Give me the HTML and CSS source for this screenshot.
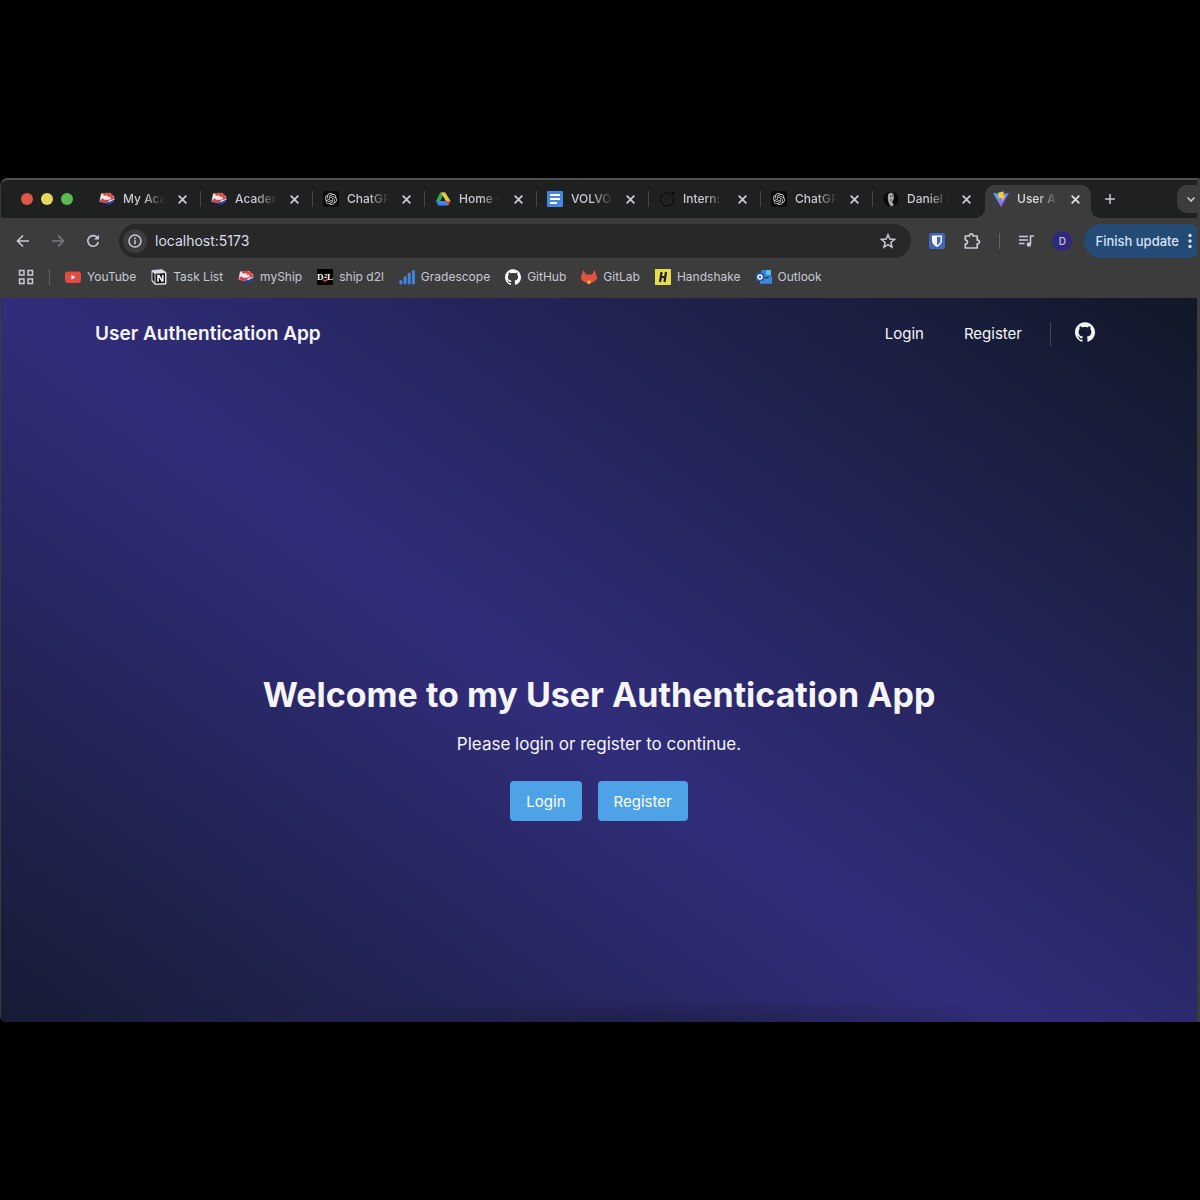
FILE: index.html
```html
<!DOCTYPE html>
<html lang="en">
<head>
<meta charset="utf-8">
<meta name="viewport" content="width=device-width, initial-scale=1">
<title>User Authentication App</title>
<link rel="stylesheet" href="styles.css">
</head>
<body>
<svg class="defs" aria-hidden="true">
  <defs>
    <linearGradient id="vite-blue" x1="0" y1="0" x2="1" y2="1"><stop offset="0" stop-color="#41b8f5"/><stop offset="1" stop-color="#b43cf0"/></linearGradient>
    <symbol id="close" viewBox="0 0 10 10"><path d="M1.5 1.5l7 7m0-7l-7 7" fill="none" stroke="currentColor" stroke-width="1.6"/></symbol>
    <symbol id="ship" viewBox="0 0 16 16">
      <path d="M4.500 11c3 .8 6-.5 11-4 0 4.500-2.500 6.500-6 6.500-2.500 0-4-.8-5-2.500z" fill="#24429a"/>
      <path d="M2 2.500l9-.5 4 3.500.5 3-5 2.500-6 .5-4-1z" fill="#e8e2ec"/>
      <path d="M3.500 2.500L8 1.500l5 2 2.500 4-3 1.500-1.500-3.500-2 .5-1-2-3 1z" fill="#e2463f"/>
      <path d="M.5 9.500l3-2 4 1.500 5-1-4 3-5 .5z" fill="#d64242"/>
      <path d="M4 5l2.500 1.500L5 8.500M8.500 6L10 8" fill="none" stroke="#f7f3f8" stroke-width="1.500"/>
    </symbol>
    <symbol id="openai" viewBox="-4 -4 32 32"><rect x="-4" y="-4" width="32" height="32" rx="5" fill="#0b0c0c"/><path fill="#d8d8dc" d="M22.2819 9.8211a5.9847 5.9847 0 0 0-.5157-4.9108 6.0462 6.0462 0 0 0-6.5098-2.9A6.0651 6.0651 0 0 0 4.9807 4.1818a5.9847 5.9847 0 0 0-3.9977 2.9 6.0462 6.0462 0 0 0 .7427 7.0966 5.98 5.98 0 0 0 .511 4.9107 6.051 6.051 0 0 0 6.5146 2.9001A5.9847 5.9847 0 0 0 13.2599 24a6.0557 6.0557 0 0 0 5.7718-4.2058 5.9894 5.9894 0 0 0 3.9977-2.9001 6.0557 6.0557 0 0 0-.7475-7.0729zm-9.022 12.6081a4.4755 4.4755 0 0 1-2.8764-1.0408l.1419-.0804 4.7783-2.7582a.7948.7948 0 0 0 .3927-.6813v-6.7369l2.02 1.1686a.071.071 0 0 1 .038.052v5.5826a4.504 4.504 0 0 1-4.4945 4.4944zm-9.6607-4.1254a4.4708 4.4708 0 0 1-.5346-3.0137l.142.0852 4.783 2.7582a.7712.7712 0 0 0 .7806 0l5.8428-3.3685v2.3324a.0804.0804 0 0 1-.0332.0615L9.74 19.9502a4.4992 4.4992 0 0 1-6.1408-1.6464zM2.3408 7.8956a4.485 4.485 0 0 1 2.3655-1.9728V11.6a.7664.7664 0 0 0 .3879.6765l5.8144 3.3543-2.0201 1.1685a.0757.0757 0 0 1-.071 0l-4.8303-2.7865A4.504 4.504 0 0 1 2.3408 7.872zm16.5963 3.8558L13.1038 8.364 15.1192 7.2a.0757.0757 0 0 1 .071 0l4.8303 2.7913a4.4944 4.4944 0 0 1-.6765 8.1042v-5.6772a.79.79 0 0 0-.407-.667zm2.0107-3.0231l-.142-.0852-4.7735-2.7818a.7759.7759 0 0 0-.7854 0L9.409 9.2297V6.8974a.0662.0662 0 0 1 .0284-.0615l4.8303-2.7866a4.4992 4.4992 0 0 1 6.6802 4.66zM8.3065 12.863l-2.02-1.1638a.0804.0804 0 0 1-.038-.0567V6.0742a4.4992 4.4992 0 0 1 7.3757-3.4537l-.142.0805L8.704 5.459a.7948.7948 0 0 0-.3927.6813zm1.0976-2.3654l2.602-1.4998 2.6069 1.4998v2.9994l-2.5974 1.4997-2.6067-1.4997Z"/></symbol>
    <symbol id="github" viewBox="0 0 24 24"><path fill="currentColor" d="M12 .297c-6.63 0-12 5.373-12 12 0 5.303 3.438 9.8 8.205 11.385.6.113.82-.258.82-.577 0-.285-.01-1.04-.015-2.04-3.338.724-4.042-1.61-4.042-1.61C4.422 18.07 3.633 17.7 3.633 17.7c-1.087-.744.084-.729.084-.729 1.205.084 1.838 1.236 1.838 1.236 1.07 1.835 2.809 1.305 3.495.998.108-.776.417-1.305.76-1.605-2.665-.3-5.466-1.332-5.466-5.93 0-1.31.465-2.38 1.235-3.22-.135-.303-.54-1.523.105-3.176 0 0 1.005-.322 3.3 1.23.96-.267 1.98-.399 3-.405 1.02.006 2.04.138 3 .405 2.28-1.552 3.285-1.23 3.285-1.23.645 1.653.24 2.873.12 3.176.765.84 1.23 1.91 1.23 3.22 0 4.61-2.805 5.625-5.475 5.92.42.36.81 1.096.81 2.22 0 1.606-.015 2.896-.015 3.286 0 .315.21.69.825.57C20.565 22.092 24 17.592 24 12.297c0-6.627-5.373-12-12-12"/></symbol>
  </defs>
</svg>

<div class="window">
  <header class="chrome">
    <div class="tab-strip">
      <div class="lights"><i class="light red"></i><i class="light yellow"></i><i class="light green"></i></div>
      <div class="tabs">
        <div class="tab"><svg class="icon"><use href="#ship"/></svg><a class="tab-title" href="#">My Acad</a><button class="close" aria-label="Close tab"><svg><use href="#close"/></svg></button></div>
        <div class="tab"><svg class="icon"><use href="#ship"/></svg><a class="tab-title" href="#">Academ</a><button class="close" aria-label="Close tab"><svg><use href="#close"/></svg></button></div>
        <div class="tab"><svg class="icon"><use href="#openai"/></svg><a class="tab-title" href="#">ChatGPT</a><button class="close" aria-label="Close tab"><svg><use href="#close"/></svg></button></div>
        <div class="tab"><svg class="icon" viewBox="0 0 16 16"><path d="M5.300 1.500h5l-2.500 4-3.600 7L1 10z" fill="#36a852"/><path d="M6 1.500h4.300L15.500 10h-5z" fill="#f0c83c"/><path d="M1 10h14.500l-2.500 4.500H3.500z" fill="#4285e8"/><path d="M11 10h4.500L13 14.500z" fill="#dd4b3e"/><path d="M8 5.500l2.800 4.500H5.300z" fill="#1f2020"/></svg><a class="tab-title" href="#">Home - G</a><button class="close" aria-label="Close tab"><svg><use href="#close"/></svg></button></div>
        <div class="tab"><svg class="icon" viewBox="0 0 16 16"><rect width="16" height="16" rx="1" fill="#4386e4"/><path d="M3 4h10M3 8h10M3 12h7" stroke="#fff" stroke-width="2"/></svg><a class="tab-title" href="#">VOLVO</a><button class="close" aria-label="Close tab"><svg><use href="#close"/></svg></button></div>
        <div class="tab"><svg class="icon" viewBox="0 0 16 16"><circle cx="8" cy="8.500" r="6.500" fill="none" stroke="#080909"/><circle cx="14" cy="2" r="1.500" fill="#080909"/></svg><a class="tab-title" href="#">Intern: S</a><button class="close" aria-label="Close tab"><svg><use href="#close"/></svg></button></div>
        <div class="tab"><svg class="icon"><use href="#openai"/></svg><a class="tab-title" href="#">ChatGPT</a><button class="close" aria-label="Close tab"><svg><use href="#close"/></svg></button></div>
        <div class="tab"><svg class="icon" viewBox="0 0 16 16"><circle cx="8" cy="8" r="7.500" fill="#080909"/><path d="M5 4c1-3 6-3 6 1 0 3-1 5-2 6l2 3-3 1.500-2-3C5 10 4.500 7 5 4z" fill="#aaa9ad"/><path d="M7 5.500h1.500M7 9h2M9 3l1.500 3" stroke="#45454a"/></svg><a class="tab-title" href="#">Daniel P</a><button class="close" aria-label="Close tab"><svg><use href="#close"/></svg></button></div>
        <div class="tab active"><svg class="icon" viewBox="0 0 16 16"><path d="M0 2l8 14 8-14-7 1z" fill="url(#vite-blue)"/><path d="M5.500 1.500l5.500-1-1 4h2.500L8.500 11l.5-4H5.500z" fill="#f0d33a"/></svg><a class="tab-title" href="#">User Au</a><button class="close" aria-label="Close tab"><svg><use href="#close"/></svg></button></div>
      </div>
      <button class="new-tab" aria-label="New tab"><svg viewBox="0 0 12 12"><path d="M6 1v10M1 6h10" stroke="currentColor" stroke-width="1.500"/></svg></button>
      <button class="tab-search" aria-label="Search tabs"><svg viewBox="0 0 10 10"><path d="M1.500 3.500L5 7l3.500-3.500" fill="none" stroke="currentColor" stroke-width="1.600"/></svg></button>
    </div>

    <div class="toolbar">
      <div class="nav-buttons">
        <button aria-label="Back"><svg class="icon" viewBox="0 0 16 16"><path d="M14 8H3m5-5.500L2.500 8 8 13.500" fill="none" stroke="currentColor" stroke-width="1.600"/></svg></button>
        <button class="dim" aria-label="Forward"><svg class="icon" viewBox="0 0 16 16"><path d="M2 8h11M8 2.500L13.500 8 8 13.500" fill="none" stroke="currentColor" stroke-width="1.600"/></svg></button>
        <button aria-label="Reload"><svg class="icon" viewBox="0 0 16 16"><path d="M13.300 9A5.300 5.300 0 1 1 12 4.300l1 1.200" fill="none" stroke="currentColor" stroke-width="1.600"/><path d="M13.900 1.800V6.600H9z" fill="currentColor"/></svg></button>
      </div>
      <div class="address">
        <button class="site-info" aria-label="Site information"><svg class="icon" viewBox="0 0 16 16"><circle cx="8" cy="8" r="6" fill="none" stroke="currentColor" stroke-width="1.500"/><path d="M8 7.300V11.300M8 4.600V6.200" stroke="currentColor" stroke-width="1.600"/></svg></button>
        <input type="text" aria-label="Address" value="localhost:5173">
        <button aria-label="Bookmark"><svg class="icon" viewBox="0 0 16 16"><path d="M8 1.800l1.800 4.300 4.700.4-3.600 3 1.100 4.600L8 11.700l-4 2.400 1.100-4.600-3.600-3 4.700-.4z" fill="none" stroke="currentColor" stroke-width="1.500"/></svg></button>
      </div>
      <div class="extensions">
        <button aria-label="Bitwarden"><svg class="icon" viewBox="0 0 16 16"><rect width="16" height="16" rx="2" fill="#4266b4"/><path d="M3 2.500h10v5c0 3-2 5-5 6.500-3-1.500-5-3.500-5-6.500z" fill="#f4f7ff"/><path d="M8 4h3.500v3.500c0 2-1.500 3.500-3.500 4.700z" fill="#4266b4"/></svg></button>
        <button aria-label="Extensions"><svg class="icon puzzle" viewBox="0 0 18 18"><path d="M2.300 4h4.200C6.300 1 10.300 1 10.100 4h4.100v4.100c3 0 3 4 0 3.800V16H2.300v-4c2.900-.2 2.900-3.900 0-4z" fill="none" stroke="currentColor" stroke-width="1.700" stroke-linejoin="round"/></svg></button>
        <i class="rule"></i>
        <button aria-label="Media"><svg class="icon" viewBox="0 0 16 16"><path d="M1 3.500h9M1 7h9M1 10.500h5.500M12.500 11V3H16" fill="none" stroke="currentColor" stroke-width="1.600"/><circle cx="10.900" cy="11.500" r="2.200" fill="currentColor"/></svg></button>
        <button class="avatar" aria-label="Profile">D</button>
      </div>
      <button class="update">Finish update <svg viewBox="0 0 4 16"><circle cx="2" cy="2.500" r="1.700"/><circle cx="2" cy="8" r="1.700"/><circle cx="2" cy="13.500" r="1.700"/></svg></button>
    </div>

    <nav class="bookmarks" aria-label="Bookmarks">
      <button aria-label="Tab groups"><svg class="icon" viewBox="0 0 16 16"><path d="M1.500 1.500h4.500v4.500H1.500zM10 1.500h4.500v4.500H10zM1.500 10h4.500v4.500H1.500zM10 10h4.500v4.500H10z" fill="none" stroke="currentColor" stroke-width="1.500"/></svg></button>
      <i class="rule"></i>
      <a href="#"><svg class="icon" viewBox="0 0 16 16"><rect y="2.500" width="16" height="11.500" rx="3" fill="#e24b42"/><path d="M6.500 6v4.500l4-2.250z" fill="#fff"/></svg>YouTube</a>
      <a href="#"><svg class="icon" viewBox="0 0 16 16"><path d="M1 1.500L11 .8l4 2.700V15l-11 .5L1 12z" fill="#d9d8e2" stroke="#d9d8e2" stroke-linejoin="round"/><path d="M1.500 3L3.500 4.800V13.500L1.500 11z" fill="#141416"/><path d="M4.500 4.700l9.500-.5V14l-9.500.5z" fill="#141416"/><path d="M7 12.700V6.500h1l3 5.500h.8V6" fill="none" stroke="#eee" stroke-width="1.700"/></svg>Task List</a>
      <a href="#"><svg class="icon"><use href="#ship"/></svg>myShip</a>
      <a href="#"><svg class="icon" viewBox="0 0 16 16"><rect width="16" height="16" fill="#000"/><text x="0" y="11" class="d2l-text">D</text><text x="10" y="11" class="d2l-text">L</text><text x="7" y="9" class="d2l-small">2</text><path d="M6 10.500l2 1.500 2.500-1.500" fill="none" stroke="#e0483f" stroke-width="1.500"/></svg>ship d2l</a>
      <a href="#"><svg class="icon" viewBox="0 0 16 16"><path d="M1.800 14v-1.500M6 14V8.500M10.200 14V5M14.400 14V2.500" stroke="#4384e0" stroke-width="3" stroke-linecap="round"/></svg>Gradescope</a>
      <a href="#"><svg class="icon white"><use href="#github"/></svg>GitHub</a>
      <a href="#"><svg class="icon" viewBox="0 0 16 16"><path d="M2.500 1L0 7.500c-.3 2 .6 3.500 2 4.500l6 3.500 6-3.500c1.400-1 2.300-2.500 2-4.500L13.500 1 11 5.500H5z" fill="#e2523f"/><path d="M5.500 12L8 10.500l2.500 1.500L8 15.500z" fill="#ee7a36"/><path d="M6.500 13L8 12l1.500 1L8 15z" fill="#f5d150"/></svg>GitLab</a>
      <a href="#"><svg class="icon" viewBox="0 0 16 16"><rect width="16" height="16" fill="#e6dc4c"/><path d="M6.500 3L5 13M11 3L9.500 13M5 8.500l6-1" stroke="#1c2030" stroke-width="2.200" fill="none"/></svg>Handshake</a>
      <a href="#"><svg class="icon" viewBox="0 0 16 16"><rect x="5" y="1" width="10" height="7" rx="1" fill="#2b86d9"/><path d="M10 1h5v5h-5z" fill="#61b9f2"/><path d="M4 7l6 3 6-3v7.500H4z" fill="#3f94e6"/><path d="M4 14.500L16 8v6.500z" fill="#3d86df"/><rect y="4" width="8" height="8" rx="1" fill="#2459b4"/><circle cx="4" cy="8" r="2" fill="none" stroke="#fff" stroke-width="1.400"/></svg>Outlook</a>
    </nav>
  </header>

  <div class="page">
    <header class="site-header">
      <a class="brand" href="#">User Authentication App</a>
      <nav class="site-nav" aria-label="Main">
        <a href="#">Login</a>
        <a href="#">Register</a>
        <a class="github" href="#" aria-label="GitHub"><svg><use href="#github"/></svg></a>
      </nav>
    </header>
    <main class="hero">
      <h1>Welcome to my User Authentication App</h1>
      <p>Please login or register to continue.</p>
      <div class="actions"><button>Login</button><button>Register</button></div>
    </main>
  </div>
</div>
</body>
</html>
```

FILE: styles.css
```css
* { box-sizing: border-box; }

body {
  margin: 0;
  min-height: 100vh;
  display: flex;
  flex-direction: column;
  justify-content: center;
  background: #000;
  font-family: Inter, "Liberation Sans", sans-serif;
  overflow-x: hidden;
}

button, input {
  font: inherit;
  color: inherit;
  background: none;
  border: 0;
  padding: 0;
}

button {
  display: flex;
  align-items: center;
  justify-content: center;
  cursor: pointer;
}

a { color: inherit; text-decoration: none; }
svg { display: block; flex: none; }
.defs { position: absolute; width: 0; height: 0; }
.icon { width: 16px; height: 16px; }
.white { color: #fff; }

.window {
  border: solid #3c3c3c;
  border-width: 2px 3px 0 1px;
  border-top-color: #505151;
  border-radius: 8px 0 0 6px;
  overflow: hidden;
}

/* Browser chrome */
.chrome {
  background: #3c3c3c;
  color: #c9c8d6;
  font-size: 12px;
  font-weight: 500;
  margin-right: -3px;
}

.tab-strip {
  display: flex;
  align-items: center;
  height: 38px;
  background: #1f2121;
  overflow: hidden;
}

.lights { display: flex; gap: 8px; padding: 0 16px 0 20px; }
.light { width: 12px; height: 12px; border-radius: 50%; }
.red { background: #e0554a; }
.yellow { background: #e4d95c; }
.green { background: #5bbb50; }

.tabs { display: flex; align-self: stretch; }

.tab {
  display: flex;
  align-items: center;
  width: 112px;
  padding: 0 12px 0 10px;
  position: relative;
}

.tab:not(.active)::after {
  content: "";
  position: absolute;
  right: 0;
  width: 1px;
  height: 16px;
  background: #444547;
}

.tab:nth-last-child(2)::after { display: none; }

.tab.active {
  width: 106px;
  margin-top: 5px;
  padding: 0 9px 5px 8px;
  border-radius: 10px 10px 0 0;
  background: #3c3c3c;
  color: #dddce8;
}

.tab.active::before, .tab.active::after {
  content: "";
  position: absolute;
  bottom: 0;
  width: 10px;
  height: 10px;
}

.tab.active::before { left: -10px; background: radial-gradient(circle at 0 0, transparent 10px, #3c3c3c 10px); }
.tab.active::after { right: -10px; background: radial-gradient(circle at 100% 0, transparent 10px, #3c3c3c 10px); }

.tab-title {
  flex: 1;
  margin: 0 8px;
  line-height: 16px;
  white-space: nowrap;
  overflow: hidden;
  mask-image: linear-gradient(to right, #000 50%, transparent 95%);
}

.close { width: 14px; height: 14px; }
.close svg { width: 11px; height: 11px; }
.new-tab { margin-left: 12px; width: 14px; height: 14px; }
.new-tab svg { width: 12px; height: 12px; }

.tab-search {
  flex: none;
  width: 28px;
  height: 28px;
  margin: 0 -5px 0 auto;
  border-radius: 10px;
  background: #3c3c3c;
}

.tab-search svg { width: 10px; height: 10px; }

.toolbar { display: flex; align-items: center; height: 45px; padding-left: 14px; }
.nav-buttons { display: flex; gap: 19px; }
.dim { color: #7b7b80; }

.address {
  flex: 1;
  display: flex;
  align-items: center;
  height: 34px;
  margin: 0 18px;
  padding: 0 15px 0 4px;
  border-radius: 17px;
  background: #282828;
}

.site-info { width: 24px; height: 24px; border-radius: 50%; background: #3c3c3c; }

.address input {
  flex: 1;
  min-width: 0;
  margin-left: 8px;
  color: #dddce8;
  font-size: 14px;
  font-weight: 400;
}

.extensions { display: flex; align-items: center; gap: 18px; }
.puzzle { width: 18px; height: 18px; }
.rule { width: 1px; height: 16px; background: #626267; }

.avatar {
  width: 20px;
  height: 20px;
  border-radius: 50%;
  background: #30297d;
  font-size: 10px;
}

.update {
  gap: 9px;
  height: 34px;
  margin: 0 -4px 0 12px;
  padding: 0 12px 0 11px;
  border-radius: 17px;
  background: #234b75;
  color: #d6e2f8;
  font-size: 13px;
  white-space: nowrap;
}

.update svg { width: 4px; height: 16px; fill: currentColor; }

.bookmarks {
  display: flex;
  align-items: center;
  gap: 15px;
  height: 35px;
  padding: 0 17px 7px;
  font-weight: 400;
}

.bookmarks a { display: flex; align-items: center; gap: 6px; line-height: 16px; white-space: nowrap; }
.d2l-text { font: bold 9px "Liberation Serif", serif; fill: #fff; }
.d2l-small { font: bold 6px "Liberation Serif", serif; fill: #fff; }

/* Web page */
.page {
  display: flex;
  flex-direction: column;
  min-height: 724px;
  background:
    radial-gradient(ellipse 35% 24px at 55% 100%, rgba(17, 24, 39, 0.4), transparent),
    linear-gradient(to top right, #111827, #312d7b, #111827) top / 100% 120% no-repeat;
  color: #f5f5f7;
}

.site-header {
  display: flex;
  align-items: center;
  justify-content: space-between;
  width: 100%;
  max-width: 1024px;
  margin: 0 auto;
  padding: 24px 16px 0 8px;
}

.brand { font-size: 19px; font-weight: 600; line-height: 24px; }
.site-nav { display: flex; align-items: center; gap: 40px; font-size: 15px; line-height: 24px; }

.github {
  display: flex;
  align-items: flex-start;
  height: 24px;
  margin-left: -12px;
  padding-left: 24px;
  border-left: 1px solid #45454d;
}

.github svg { width: 20px; height: 20px; }

.hero {
  flex: 1;
  display: flex;
  flex-direction: column;
  align-items: center;
  justify-content: flex-end;
  padding-bottom: 201px;
  text-align: center;
}

.hero h1 { margin: 0; font-size: 34px; font-weight: 700; line-height: 40px; }
.hero p { margin: 16px 0 24px; font-size: 17px; line-height: 26px; }
.actions { display: flex; gap: 16px; }

.actions button {
  height: 40px;
  padding: 0 16px;
  border-radius: 4px;
  background: #4da3e5;
  color: #fff;
  font-size: 15px;
}
```
